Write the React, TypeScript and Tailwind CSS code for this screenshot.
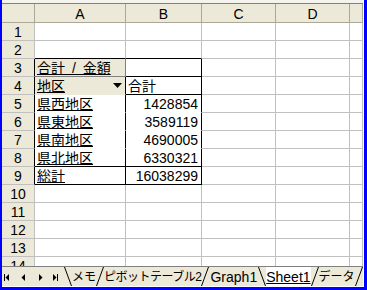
import React from "react";

type CellSpec = {
  text?: React.ReactNode;
  right?: boolean;
  bg?: string;
  bb?: string;
  br?: string;
  underline?: boolean;
  dropdown?: boolean;
  spaced?: boolean;
};

const WIDTHS = ["w-[91px]", "w-[76px]", "w-[74px]", "w-[74px]", "flex-1"];
const LETTERS = ["A", "B", "C", "D", ""];

const names: Record<number, string> = { 5: "県西地区", 6: "県東地区", 7: "県南地区", 8: "県北地区" };
const nums: Record<number, string> = { 5: "1428854", 6: "3589119", 7: "4690005", 8: "6330321" };

function spec(r: number, c: number): CellSpec {
  const s: CellSpec = { bg: "bg-white", bb: "border-b-[#c0c0c0]", br: "border-r-[#c0c0c0]" };
  if (c > 1) return s;
  if (r === 2) s.bb = "border-b-black";
  if (r === 3) {
    if (c === 0) {
      s.bg = "bg-[#ece9d8]";
      s.bb = "border-b-[#808080]";
      s.br = "border-r-[#808080]";
      s.text = "合計 / 金額";
      s.underline = true;
      s.spaced = true;
    } else {
      s.bb = "border-b-black";
      s.br = "border-r-black";
    }
  }
  if (r === 4) {
    if (c === 0) {
      s.bg = "bg-[#ece9d8]";
      s.bb = "border-b-[#ece9d8]";
      s.br = "border-r-black";
      s.text = "地区";
      s.underline = true;
      s.dropdown = true;
    } else {
      s.bb = "border-b-black";
      s.br = "border-r-black";
      s.text = "合計";
    }
  }
  if (r >= 5 && r <= 8) {
    s.bb = r === 8 ? "border-b-black" : "border-b-white";
    s.br = "border-r-black";
    if (c === 0) {
      s.text = names[r];
      s.underline = true;
    } else {
      s.text = nums[r];
      s.right = true;
    }
  }
  if (r === 9) {
    s.bb = "border-b-black";
    s.br = "border-r-black";
    if (c === 0) {
      s.text = "総計";
      s.underline = true;
    } else {
      s.text = "16038299";
      s.right = true;
    }
  }
  return s;
}

function Row({ r }: { r: number }) {
  const hdrBr = r >= 3 && r <= 9 ? "border-r-black" : "border-r-[#c0c0c0]";
  return (
    <div className="flex h-[18px] shrink-0">
      <div
        className={`w-[33px] shrink-0 border-r border-b border-b-[#c0c0c0] ${hdrBr} bg-[#ece9d8] flex items-end justify-center leading-[16px]`}
      >
        {r}
      </div>
      {WIDTHS.map((w, c) => {
        const s = spec(r, c);
        return (
          <div
            key={c}
            className={`${w} shrink-0 border-r border-b ${s.bb} ${s.br} ${s.bg} flex items-end leading-[16px] whitespace-nowrap overflow-hidden ${
              s.right ? "justify-end pr-[3px]" : "pl-[2px]"
            }`}
          >
            {s.text !== undefined && (
              <span
                className={`${s.underline ? "underline underline-offset-[1px]" : ""} ${
                  s.spaced ? "[word-spacing:3px]" : ""
                }`}
              >
                {s.text}
              </span>
            )}
            {s.dropdown && (
              <div className="ml-auto mb-[1px] w-[15px] h-[15px] bg-[#ece9d8] flex items-center justify-center">
                <svg width="9" height="5" viewBox="0 0 9 5">
                  <polygon points="0,0 9,0 4.5,5" fill="black" />
                </svg>
              </div>
            )}
          </div>
        );
      })}
    </div>
  );
}

function Slant({ dir }: { dir: "back" | "fwd" }) {
  return (
    <svg width="8" height="19" viewBox="0 0 8 19" className="shrink-0">
      {dir === "back" ? (
        <line x1="0.5" y1="0" x2="7.5" y2="19" stroke="black" strokeWidth="1" />
      ) : (
        <line x1="0.5" y1="19" x2="7.5" y2="0" stroke="black" strokeWidth="1" />
      )}
    </svg>
  );
}

function NavButtons() {
  return (
    <div className="w-[62px] shrink-0 relative h-full">
      <svg width="62" height="19" viewBox="0 0 62 19" className="absolute left-0 top-0">
        <rect x="2" y="7" width="1" height="7" fill="black" />
        <polygon points="7,7 7,14 3.5,10.5" fill="black" />
        <polygon points="23,7 23,14 19.5,10.5" fill="black" />
        <polygon points="37,7 37,14 40.5,10.5" fill="black" />
        <polygon points="51,7 51,14 54.5,10.5" fill="black" />
        <rect x="55" y="7" width="1" height="7" fill="black" />
      </svg>
    </div>
  );
}

function TabBar() {
  return (
    <div className="h-[20px] shrink-0 border-t border-t-[#808080] bg-[#ece9d8] flex items-stretch overflow-hidden leading-[16px]">
      <NavButtons />
      <Slant dir="back" />
      <span className="shrink-0 flex items-end pb-[1px] text-[12px]">メモ</span>
      <Slant dir="fwd" />
      <span className="shrink-0 flex items-end pb-[1px] text-[12px] tracking-[-0.5px]">ピボットテーブル2</span>
      <Slant dir="fwd" />
      <span className="shrink-0 flex items-end pb-[1px] px-[1px]">Graph1</span>
      <Slant dir="back" />
      <span className="shrink-0 flex items-end pb-[1px] bg-white">
        <span className="underline underline-offset-[1px]">Sheet1</span>
      </span>
      <Slant dir="fwd" />
      <span className="shrink-0 flex items-end pb-[1px] text-[12px]">データ</span>
      <Slant dir="fwd" />
    </div>
  );
}

export default function App() {
  const rows = Array.from({ length: 14 }, (_, i) => i + 1);
  return (
    <div className="w-[367px] h-[290px] bg-[#0000ff] pl-[2px] pr-[3px] pb-[3px] flex flex-col overflow-hidden font-['Liberation_Sans','Noto_Sans_CJK_JP',sans-serif] text-[14px] text-black">
      <div className="flex-1 min-h-0 flex flex-col bg-white border-r border-r-white">
        <div className="h-[3px] shrink-0 bg-[#f4f3ee]" />
        <div className="h-px shrink-0 bg-[#808080]" />
        <div className="flex h-[19px] shrink-0">
          <div className="w-[33px] shrink-0 border-r border-b border-[#aca899] bg-[#ece9d8]" />
          {WIDTHS.map((w, c) => (
            <div
              key={c}
              className={`${w} shrink-0 border-r border-b border-[#aca899] bg-[#ece9d8] flex items-end justify-center leading-[16px]`}
            >
              {LETTERS[c]}
            </div>
          ))}
        </div>
        <div className="flex-1 min-h-0 overflow-hidden flex flex-col">
          {rows.map((r) => (
            <Row key={r} r={r} />
          ))}
        </div>
        <TabBar />
        <div className="h-px shrink-0 bg-white" />
      </div>
    </div>
  );
}
